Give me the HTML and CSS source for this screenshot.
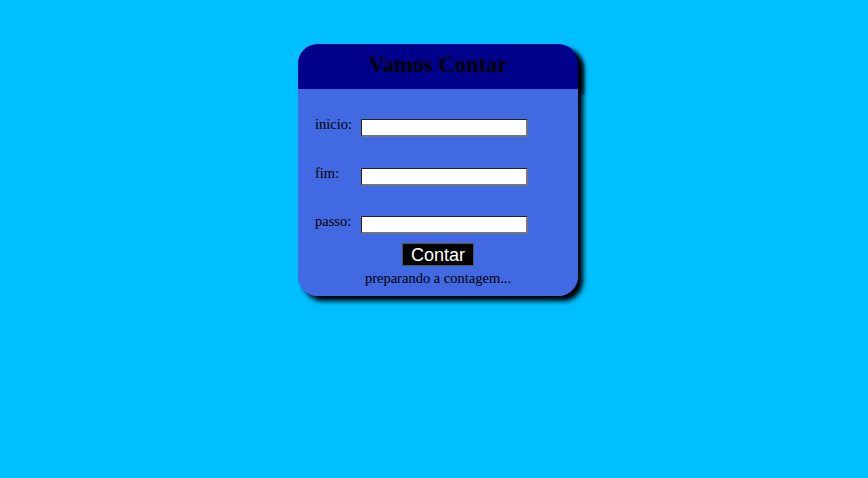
FILE: index.html
```html
<!DOCTYPE html>
<html lang="pt">
<head>
<meta charset="utf-8">
<title>Vamos Contar</title>
<link rel="stylesheet" href="styles.css">
</head>
<body>
<main class="card">
  <header class="card-head">
    <h1 class="title">Vamos Contar</h1>
  </header>
  <section class="card-body">
    <div class="row">
      <label class="lbl" for="inicio">inicio:</label>
      <input class="field" type="number" id="inicio">
    </div>
    <div class="row">
      <label class="lbl" for="fim">fim:</label>
      <input class="field" type="number" id="fim">
    </div>
    <div class="row">
      <label class="lbl" for="passo">passo:</label>
      <input class="field" type="number" id="passo">
    </div>
    <div class="actions">
      <button class="btn" type="button">Contar</button>
      <div class="result">preparando a contagem...</div>
    </div>
  </section>
</main>
</body>
</html>
```
FILE: styles.css
```css
html, body {
  margin: 0;
  padding: 0;
}
body {
  background: #00BFFF;
  font-family: "Liberation Serif", "Times New Roman", serif;
  font-size: 14.5px;
  color: #000;
  min-height: 478px;
}
.card {
  width: 280px;
  margin: 44px 0 0 298px;
  background: #4169E1;
  border-radius: 20px;
  box-shadow: 5px 5px 5px #000;
  display: flex;
  flex-direction: column;
}
.card-head {
  box-sizing: border-box;
  height: 45px;
  padding-bottom: 2px;
  background: #00008B;
  border-radius: 20px 20px 0 0;
  box-shadow: 5px 5px 5px #000;
  display: flex;
  align-items: center;
  justify-content: center;
}
.title {
  margin: 0;
  font-size: 22.6px;
  font-weight: bold;
  line-height: 1;
}
.card-body {
  background: #4169E1;
  border-radius: 0 0 20px 20px;
  padding: 30px 0 9px 17px;
  display: flex;
  flex-direction: column;
}
.row {
  display: flex;
  align-items: flex-start;
  height: 18px;
  margin-bottom: 31px;
}
.row:nth-child(2) {
  margin-bottom: 30px;
}
.row:nth-child(3) {
  margin-bottom: 9px;
}
.lbl {
  width: 46px;
  margin-top: -4px;
  line-height: 18px;
}
.field {
  box-sizing: border-box;
  width: 167px;
  height: 18px;
  margin: 0;
  padding: 0 2px;
  background: #fff;
  border-style: solid;
  border-color: #222 #767676 #767676 #222;
  border-width: 1px 2px 2px 1px;
  -moz-appearance: textfield;
  appearance: textfield;
}
.field::-webkit-outer-spin-button,
.field::-webkit-inner-spin-button {
  -webkit-appearance: none;
  margin: 0;
}
.actions {
  display: flex;
  flex-direction: column;
  align-items: center;
  margin-left: -17px;
}
.btn {
  box-sizing: border-box;
  height: 23px;
  width: 72px;
  padding: 0;
  background: #000;
  color: #fff;
  border: 1px solid #555;
  font-family: "Liberation Sans", Arial, sans-serif;
  font-size: 18px;
  line-height: 20px;
}
.result {
  margin-top: 3px;
  line-height: 18px;
}
```
